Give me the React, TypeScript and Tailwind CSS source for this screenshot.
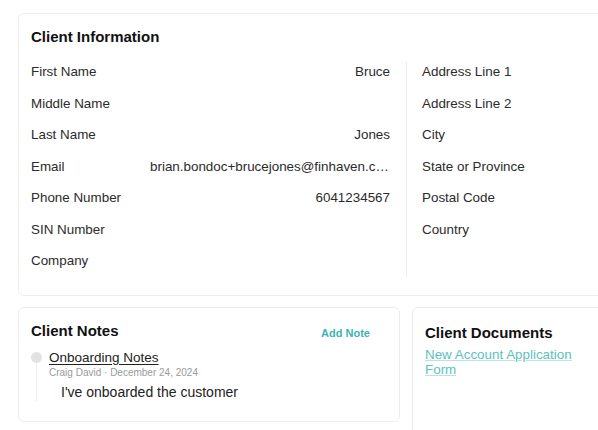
import React from 'react';

const leftRows: [string, string][] = [
    ['First Name', 'Bruce'],
    ['Middle Name', ''],
    ['Last Name', 'Jones'],
    ['Email', 'brian.bondoc+brucejones@finhaven.com'],
    ['Phone Number', '6041234567'],
    ['SIN Number', ''],
    ['Company', ''],
];

const rightRows = ['Address Line 1', 'Address Line 2', 'City', 'State or Province', 'Postal Code', 'Country'];

function Row({ label, value }: { label: string; value?: string }) {
    return (
        <div className="flex h-[31.5px] items-center text-[13.4px] text-[#2b2b2b]">
            <span className="w-[119px] shrink-0">{label}</span>
            {value !== undefined && <span className="flex-1 min-w-0 truncate text-right">{value}</span>}
        </div>
    );
}

export default function App() {
    return (
        <div
            className="w-[598px] h-[430px] overflow-hidden bg-white pl-[18px] pt-[13px]"
            style={{ fontFamily: '"Liberation Sans", Arial, sans-serif' }}
        >
            {/* Client information */}
            <div className="w-[640px] rounded-md border border-[#ededed] pl-3 pt-[13px] pb-[18px]">
                <h2 className="text-[15px] leading-5 font-bold text-[#111]">Client Information</h2>
                <div className="mt-[9.5px] flex">
                    <div className="w-[359px]">
                        {leftRows.map(([l, v]) => (
                            <Row key={l} label={l} value={v} />
                        ))}
                    </div>
                    <div className="ml-4 mt-[4px] w-px self-stretch bg-[#ededed]" />
                    <div className="pl-[15px]">
                        {rightRows.map((l) => (
                            <Row key={l} label={l} />
                        ))}
                    </div>
                </div>
            </div>

            <div className="mt-[11px] flex gap-[12px]">
                {/* Client notes */}
                <div className="w-[382px] h-[115px] shrink-0 rounded-md border border-[#ededed] pl-3 pr-[29px] pt-[13px]">
                    <div className="flex items-center justify-between">
                        <h2 className="text-[15px] leading-5 font-bold text-[#111]">Client Notes</h2>
                        <button className="mt-[4px] text-[11px] font-bold text-[#3bb5b1]">Add Note</button>
                    </div>
                    <div className="mt-[8px] flex">
                        <div className="flex w-[11px] flex-col items-center">
                            <span className="mt-[2px] h-[11px] w-[11px] rounded-full bg-[#e2e2e2]" />
                            <span className="w-px h-[38px] bg-[#eeeeee]" />
                        </div>
                        <div className="ml-[7px]">
                            <div className="text-[13.5px] leading-4 text-[#222] underline underline-offset-2">Onboarding Notes</div>
                            <div className="mt-[1px] text-[10px] leading-3 text-[#9a9a9a]">Craig David · December 24, 2024</div>
                            <div className="ml-3 mt-[3px] text-[14px] leading-5 text-[#222]">I've onboarded the customer</div>
                        </div>
                    </div>
                </div>

                {/* Client documents */}
                <div className="w-[200px] h-[140px] shrink-0 rounded-md border border-[#ededed] pl-3 pt-[15px]">
                    <h2 className="text-[15px] leading-5 font-bold text-[#111]">Client Documents</h2>
                    <a className="mt-[4px] block w-[165px] text-[13.4px] leading-[15px] text-[#5cc2bd] underline decoration-[#b8e4e2]">
                        New Account Application Form
                    </a>
                </div>
            </div>
        </div>
    );
}
